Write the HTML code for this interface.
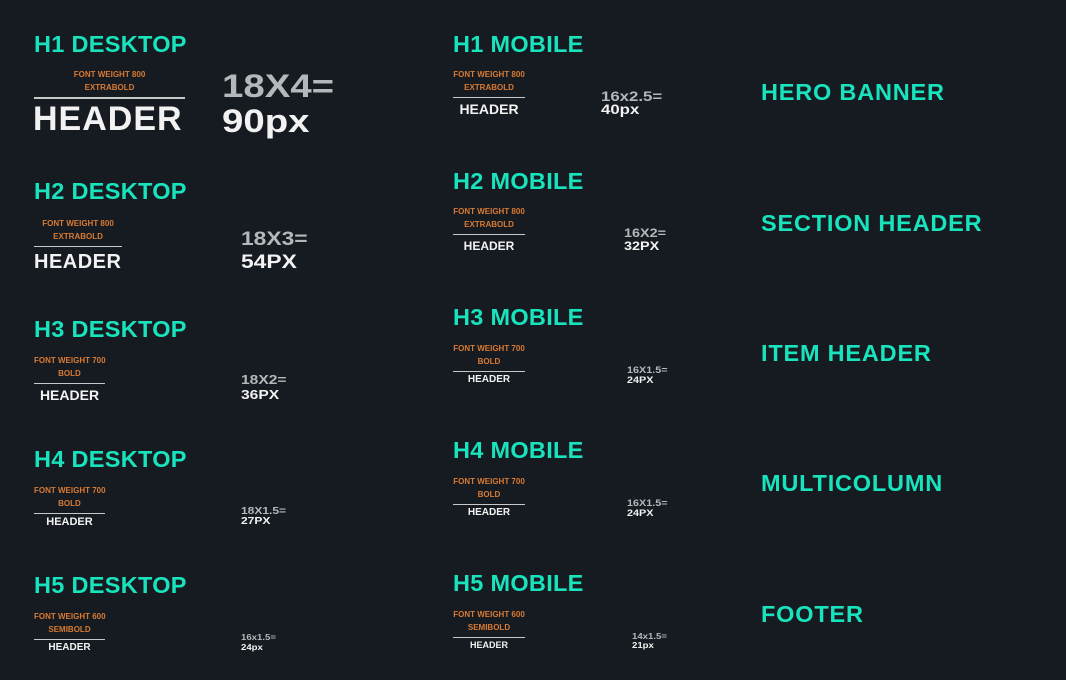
<!DOCTYPE html>
<html><head><meta charset="utf-8"><style>
body{margin:0;width:1066px;height:680px;background:#151b21;position:relative;overflow:hidden;font-family:"Liberation Sans",sans-serif;font-weight:bold}
div{position:absolute;white-space:nowrap;line-height:1}
.h{color:#19e3bd;font-size:23.5px;letter-spacing:0.3px}
.o{color:#d97a33;font-size:8px;text-align:center}
.w{color:#f2f2f2}
.g{color:#b5b8bb}
.n{transform:scaleX(1.2);transform-origin:left center}
.l{height:1px;background:#c8c8c8}
.r{letter-spacing:0.8px}
</style></head><body>
<!-- left -->
<div class="h" style="left:34px;top:33px">H1 DESKTOP</div>
<div class="o" style="left:34px;width:151px;top:71px">FONT WEIGHT 800</div>
<div class="o" style="left:34px;width:151px;top:84px">EXTRABOLD</div>
<div class="l" style="left:34px;width:151px;top:97px;height:2px"></div>
<div class="w" style="left:33px;top:102px;font-size:34px;letter-spacing:1px">HEADER</div>
<div class="g n" style="left:222px;top:70px;font-size:32px">18X4=</div>
<div class="w n" style="left:222px;top:105px;font-size:32px">90px</div>

<div class="h" style="left:34px;top:180px">H2 DESKTOP</div>
<div class="o" style="left:34px;width:88px;top:220px">FONT WEIGHT 800</div>
<div class="o" style="left:34px;width:88px;top:233px">EXTRABOLD</div>
<div class="l" style="left:34px;width:88px;top:246px"></div>
<div class="w" style="left:34px;top:252px;font-size:20px;letter-spacing:0.5px">HEADER</div>
<div class="g n" style="left:241px;top:230px;font-size:19px">18X3=</div>
<div class="w n" style="left:241px;top:253px;font-size:19px">54PX</div>

<div class="h" style="left:34px;top:318px">H3 DESKTOP</div>
<div class="o" style="left:34px;width:71px;top:357px">FONT WEIGHT 700</div>
<div class="o" style="left:34px;width:71px;top:370px">BOLD</div>
<div class="l" style="left:34px;width:71px;top:383px"></div>
<div class="w" style="left:34px;width:71px;text-align:center;top:388px;font-size:14px">HEADER</div>
<div class="g n" style="left:241px;top:373px;font-size:13px">18X2=</div>
<div class="w n" style="left:241px;top:388px;font-size:13px">36PX</div>

<div class="h" style="left:34px;top:448px">H4 DESKTOP</div>
<div class="o" style="left:34px;width:71px;top:487px">FONT WEIGHT 700</div>
<div class="o" style="left:34px;width:71px;top:500px">BOLD</div>
<div class="l" style="left:34px;width:71px;top:513px"></div>
<div class="w" style="left:34px;width:71px;text-align:center;top:517px;font-size:11px">HEADER</div>
<div class="g n" style="left:241px;top:507px;font-size:10px">18X1.5=</div>
<div class="w n" style="left:241px;top:517px;font-size:10px">27PX</div>

<div class="h" style="left:34px;top:574px">H5 DESKTOP</div>
<div class="o" style="left:34px;width:71px;top:613px">FONT WEIGHT 600</div>
<div class="o" style="left:34px;width:71px;top:626px">SEMIBOLD</div>
<div class="l" style="left:34px;width:71px;top:639px"></div>
<div class="w" style="left:34px;width:71px;text-align:center;top:643px;font-size:10px">HEADER</div>
<div class="g n" style="left:241px;top:634px;font-size:8px">16x1.5=</div>
<div class="w n" style="left:241px;top:644px;font-size:8px">24px</div>

<!-- middle -->
<div class="h" style="left:453px;top:33px">H1 MOBILE</div>
<div class="o" style="left:453px;width:72px;top:71px">FONT WEIGHT 800</div>
<div class="o" style="left:453px;width:72px;top:84px">EXTRABOLD</div>
<div class="l" style="left:453px;width:72px;top:97px"></div>
<div class="w" style="left:453px;width:72px;text-align:center;top:102px;font-size:14px">HEADER</div>
<div class="g n" style="left:601px;top:89px;font-size:14px">16x2.5=</div>
<div class="w n" style="left:601px;top:102px;font-size:14px">40px</div>

<div class="h" style="left:453px;top:170px">H2 MOBILE</div>
<div class="o" style="left:453px;width:72px;top:208px">FONT WEIGHT 800</div>
<div class="o" style="left:453px;width:72px;top:221px">EXTRABOLD</div>
<div class="l" style="left:453px;width:72px;top:234px"></div>
<div class="w" style="left:453px;width:72px;text-align:center;top:240px;font-size:12px">HEADER</div>
<div class="g n" style="left:624px;top:227px;font-size:12px">16X2=</div>
<div class="w n" style="left:624px;top:240px;font-size:12px">32PX</div>

<div class="h" style="left:453px;top:306px">H3 MOBILE</div>
<div class="o" style="left:453px;width:72px;top:345px">FONT WEIGHT 700</div>
<div class="o" style="left:453px;width:72px;top:358px">BOLD</div>
<div class="l" style="left:453px;width:72px;top:371px"></div>
<div class="w" style="left:453px;width:72px;text-align:center;top:375px;font-size:10px">HEADER</div>
<div class="g n" style="left:627px;top:366px;font-size:9px">16X1.5=</div>
<div class="w n" style="left:627px;top:376px;font-size:9px">24PX</div>

<div class="h" style="left:453px;top:439px">H4 MOBILE</div>
<div class="o" style="left:453px;width:72px;top:478px">FONT WEIGHT 700</div>
<div class="o" style="left:453px;width:72px;top:491px">BOLD</div>
<div class="l" style="left:453px;width:72px;top:504px"></div>
<div class="w" style="left:453px;width:72px;text-align:center;top:508px;font-size:10px">HEADER</div>
<div class="g n" style="left:627px;top:499px;font-size:9px">16X1.5=</div>
<div class="w n" style="left:627px;top:509px;font-size:9px">24PX</div>

<div class="h" style="left:453px;top:572px">H5 MOBILE</div>
<div class="o" style="left:453px;width:72px;top:611px">FONT WEIGHT 600</div>
<div class="o" style="left:453px;width:72px;top:624px">SEMIBOLD</div>
<div class="l" style="left:453px;width:72px;top:637px"></div>
<div class="w" style="left:453px;width:72px;text-align:center;top:641px;font-size:9px">HEADER</div>
<div class="g n" style="left:632px;top:633px;font-size:8px">14x1.5=</div>
<div class="w n" style="left:632px;top:642px;font-size:8px">21px</div>

<!-- right -->
<div class="h r" style="left:761px;top:81px">HERO BANNER</div>
<div class="h r" style="left:761px;top:212px">SECTION HEADER</div>
<div class="h r" style="left:761px;top:342px">ITEM HEADER</div>
<div class="h r" style="left:761px;top:472px">MULTICOLUMN</div>
<div class="h r" style="left:761px;top:603px">FOOTER</div>
</body></html>
